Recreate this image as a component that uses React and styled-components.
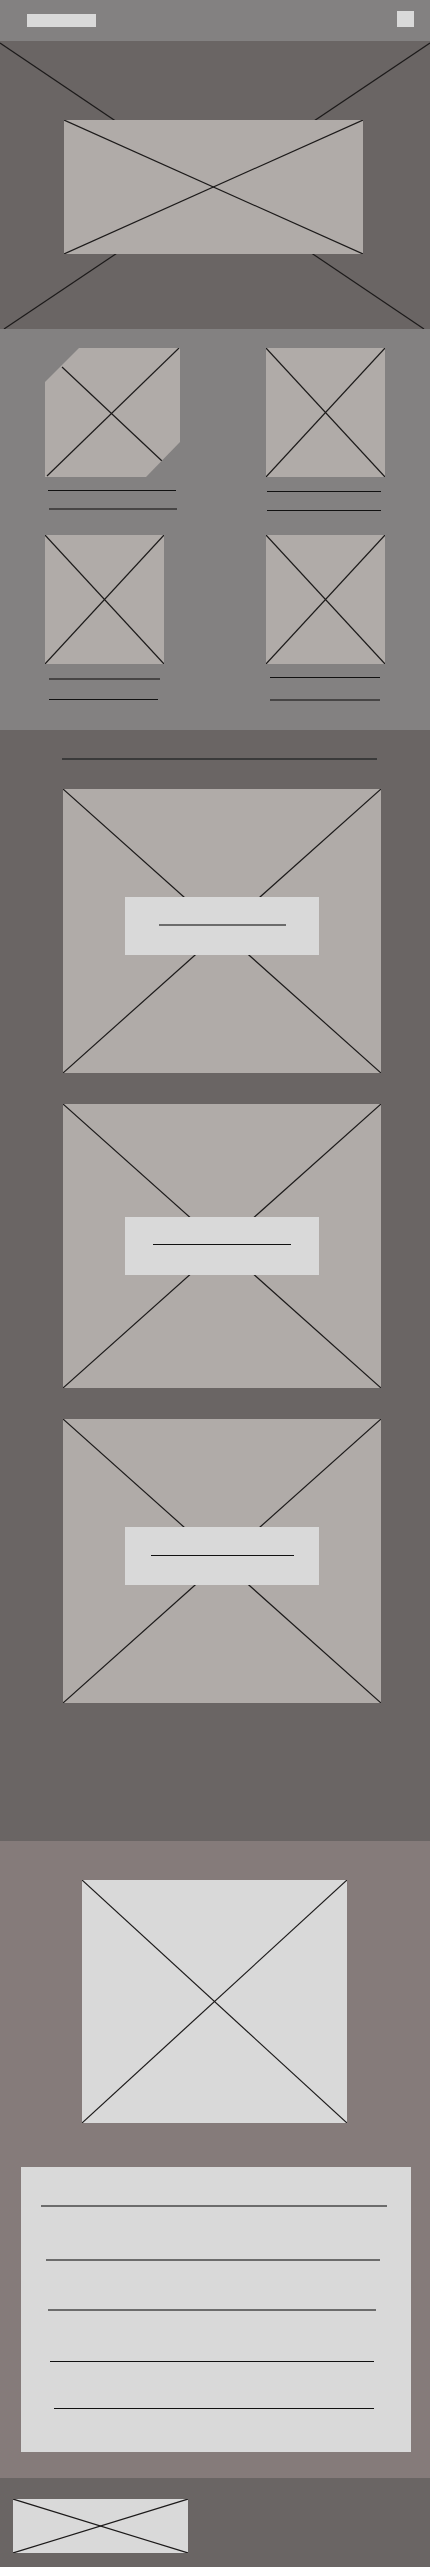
import React from "react";
import styled, { createGlobalStyle } from "styled-components";

const GlobalStyle = createGlobalStyle`
  html, body {
    margin: 0;
    padding: 0;
    background: #6a6564;
    font-family: "Liberation Sans", Arial, sans-serif;
  }
`;

const Page = styled.div`
  width: 430px;
  display: flex;
  flex-direction: column;
`;

/* placeholder cross, drawn over a box */
const CrossSvg = styled.svg`
  position: absolute;
  inset: 0;
  width: 100%;
  height: 100%;
  pointer-events: none;
`;

function Cross({ lines, w = 100, h = 100 }) {
  const l = lines || [
    [0, 0, w, h],
    [0, h, w, 0],
  ];
  return (
    <CrossSvg viewBox={`0 0 ${w} ${h}`} preserveAspectRatio="none">
      {l.map(([x1, y1, x2, y2], i) => (
        <line
          key={i}
          x1={x1}
          y1={y1}
          x2={x2}
          y2={y2}
          stroke="#1c1a1a"
          strokeWidth="1.2"
          vectorEffect="non-scaling-stroke"
        />
      ))}
    </CrossSvg>
  );
}

const Header = styled.header`
  height: 41px;
  box-sizing: border-box;
  background: #838181;
  display: flex;
  align-items: flex-end;
  justify-content: space-between;
  padding: 0 16px 14px 27px;
`;

const Logo = styled.div`
  width: 69px;
  height: 13px;
  background: #d9d9d9;
`;

const MenuBtn = styled.div`
  width: 17px;
  height: 16px;
  background: #d9d9d9;
`;

const Hero = styled.section`
  position: relative;
  height: 288px;
  box-sizing: border-box;
  background: #6a6564;
  display: flex;
  padding: 79px 67px 75px 64px;
`;

const HeroImage = styled.div`
  position: relative;
  flex: 1;
  background: #b0aba8;
`;

const Products = styled.section`
  height: 401px;
  box-sizing: border-box;
  background: #838181;
  display: grid;
  grid-template-columns: 221px 164px;
  grid-template-rows: 187px auto;
  padding: 19px 0 0 45px;
`;

const Product = styled.div`
  display: flex;
  flex-direction: column;
`;

const Thumb = styled.div`
  position: relative;
  width: ${(p) => p.$w}px;
  height: 129px;
  background: #b0aba8;
  ${(p) =>
    p.$cut &&
    "clip-path: polygon(34px 0, 100% 0, 100% 94px, 101px 100%, 0 100%, 0 34px);"}
`;

const Line = styled.div`
  width: ${(p) => p.$w}px;
  height: ${(p) => (p.$thick ? 2 : 1)}px;
  margin-top: ${(p) => p.$mt || 0}px;
  margin-left: ${(p) => p.$ml || 0}px;
  background: ${(p) => p.$color || "#111"};
`;

const Features = styled.section`
  background: #6a6564;
  display: flex;
  flex-direction: column;
  padding: 28px 49px 138px 63px;
  gap: 31px;
`;

const Rule = styled.div`
  width: 315px;
  height: 2px;
  margin: 0 0 -2px -1px;
  background: #3a3a3a;
`;

const FeatureCard = styled.div`
  position: relative;
  width: 318px;
  height: 284px;
  background: #b0aba8;
  display: flex;
  justify-content: center;
  align-items: center;
`;

const Label = styled.div`
  position: relative;
  z-index: 1;
  width: 194px;
  height: 58px;
  background: #d9d9d9;
  display: flex;
  flex-direction: column;
  align-items: center;
  margin-bottom: ${(p) => p.$lift || 0}px;
  box-sizing: border-box;
  padding-top: ${(p) => p.$lineTop}px;
`;

const About = styled.section`
  background: #857b7a;
  display: flex;
  flex-direction: column;
  align-items: flex-start;
  padding: 39px 19px 26px 21px;
  gap: 44px;
`;

const AboutImage = styled.div`
  position: relative;
  width: 265px;
  height: 243px;
  margin-left: 61px;
  background: #d9d9d9;
`;

const TextPanel = styled.div`
  width: 390px;
  height: 285px;
  box-sizing: border-box;
  background: #d9d9d9;
  display: flex;
  flex-direction: column;
  padding-top: 38px;
`;

const Footer = styled.footer`
  height: 89px;
  box-sizing: border-box;
  background: #6a6564;
  padding: 21px 13px;
`;

const FooterLogo = styled.div`
  position: relative;
  width: 175px;
  height: 54px;
  background: #d9d9d9;
`;

const products = [
  {
    w: 135,
    cut: true,
    lines: [
      { w: 128, ml: 3, mt: 13 },
      { w: 128, ml: 4, mt: 17, thick: true, color: "#474545" },
    ],
  },
  {
    w: 119,
    lines: [
      { w: 114, ml: 1, mt: 14 },
      { w: 114, ml: 1, mt: 18 },
    ],
  },
  {
    w: 119,
    lines: [
      { w: 111, ml: 4, mt: 14, thick: true, color: "#474545" },
      { w: 109, ml: 4, mt: 19 },
    ],
  },
  {
    w: 119,
    lines: [
      { w: 110, ml: 4, mt: 13 },
      { w: 110, ml: 4, mt: 21, thick: true, color: "#474545" },
    ],
  },
];

const features = [
  { lift: 10, lineTop: 27, w: 127, color: "#6c6c6c", thick: true },
  { lift: 0, lineTop: 27, w: 138, color: "#111" },
  { lift: 10, lineTop: 28, w: 143, color: "#111" },
];

const panelLines = [
  { ml: 20, w: 346, mt: 0, thick: true, color: "#6c6c6c" },
  { ml: 25, w: 334, mt: 52, thick: true, color: "#6c6c6c" },
  { ml: 27, w: 328, mt: 48, thick: true, color: "#6c6c6c" },
  { ml: 29, w: 324, mt: 50, color: "#111" },
  { ml: 33, w: 320, mt: 46, color: "#111" },
];

export default function App() {
  return (
    <Page>
      <GlobalStyle />
      <Header>
        <Logo />
        <MenuBtn />
      </Header>

      <Hero>
        <Cross
          w={430}
          h={288}
          lines={[
            [0, 2, 424, 288],
            [4, 288, 430, 2],
          ]}
        />
        <HeroImage>
          <Cross />
        </HeroImage>
      </Hero>

      <Products>
        {products.map((p, i) => (
          <Product key={i}>
            <Thumb $w={p.w} $cut={p.cut}>
              {p.cut ? (
                <Cross
                  w={135}
                  h={129}
                  lines={[
                    [17, 19, 117, 113],
                    [2, 128, 134, 0],
                  ]}
                />
              ) : (
                <Cross />
              )}
            </Thumb>
            {p.lines.map((l, j) => (
              <Line
                key={j}
                $w={l.w}
                $ml={l.ml}
                $mt={l.mt}
                $thick={l.thick}
                $color={l.color}
              />
            ))}
          </Product>
        ))}
      </Products>

      <Features>
        <Rule />
        {features.map((f, i) => (
          <FeatureCard key={i}>
            <Cross />
            <Label $lift={f.lift} $lineTop={f.lineTop}>
              <Line $w={f.w} $thick={f.thick} $color={f.color} />
            </Label>
          </FeatureCard>
        ))}
      </Features>

      <About>
        <AboutImage>
          <Cross />
        </AboutImage>
        <TextPanel>
          {panelLines.map((l, i) => (
            <Line
              key={i}
              $w={l.w}
              $ml={l.ml}
              $mt={l.mt}
              $thick={l.thick}
              $color={l.color}
            />
          ))}
        </TextPanel>
      </About>

      <Footer>
        <FooterLogo>
          <Cross />
        </FooterLogo>
      </Footer>
    </Page>
  );
}
